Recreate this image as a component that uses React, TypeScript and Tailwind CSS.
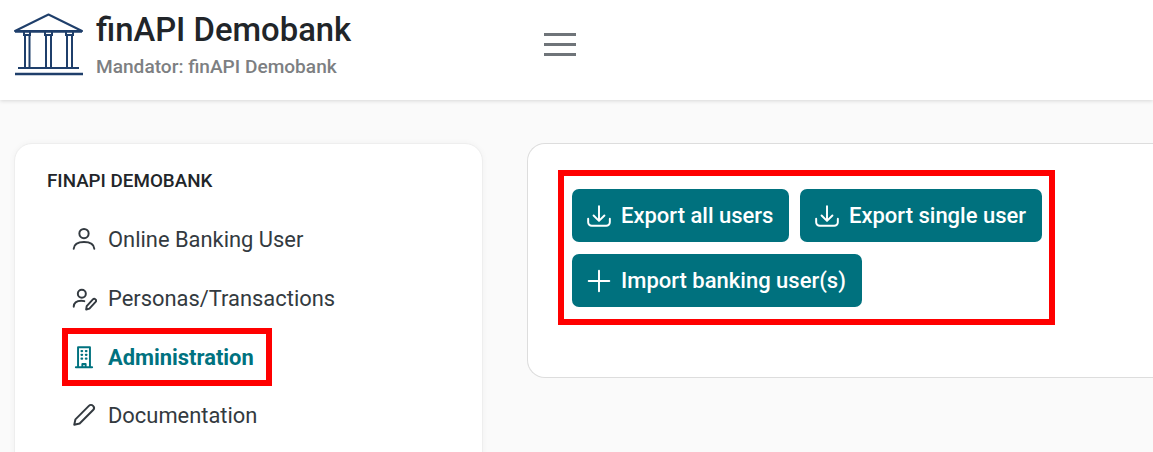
import React from "react";

const iconProps = {
  fill: "none",
  stroke: "currentColor",
  strokeWidth: 1.8,
  strokeLinecap: "round" as const,
  strokeLinejoin: "round" as const,
  viewBox: "0 0 24 24",
};

function Logo() {
  return (
    <svg width="70" height="63" viewBox="0 0 70 63" fill="none" stroke="#1f3f6b" strokeWidth="2" className="shrink-0">
      <path d="M1 18 L34.500 1.500 L68 18 Z" strokeLinejoin="round" />
      <path d="M1 18.500 H68" strokeWidth="2.500" />
      <path d="M10 19v3h6v-3M10 22h6M11 22v33M15.500 22v33" />
      <path d="M31 19v3h7v-3M31 22h7M32 22v33M37 22v33" />
      <path d="M52 19v3h7v-3M52 22h7M53 22v33M58 22v33" />
      <path d="M4 55 H65" />
      <path d="M1 61 H69" strokeWidth="2.500" />
    </svg>
  );
}

function DownloadIcon() {
  return (
    <svg width="26" height="26" {...iconProps} className="shrink-0">
      <path d="M2 14.500v3.200A3.300 3.300 0 0 0 5.300 21h13.400a3.300 3.300 0 0 0 3.300-3.300v-3.200" />
      <path d="M12 3v13M7 11.500l5 5 5-5" />
    </svg>
  );
}

function NavItem({ icon, label }: { icon: React.ReactNode; label: string }) {
  return (
    <div className="flex h-[46px] items-center gap-[11px] text-[#333a40]">
      <span className="-ml-[1px] flex w-[27px] justify-center">{icon}</span>
      <span className="pt-[2px] text-[21.9px] leading-none">{label}</span>
    </div>
  );
}

function ActionButton({ icon, label, width }: { icon: React.ReactNode; label: string; width: string }) {
  return (
    <button className={`flex h-[53px] items-center gap-[9px] rounded-[7px] bg-[#00717e] pl-[14px] text-[22px] font-medium whitespace-nowrap text-white ${width}`}>
      {icon}
      <span>{label}</span>
    </button>
  );
}

export default function App() {
  return (
    <div className="flex h-[452px] w-[1153px] flex-col overflow-hidden bg-[#fafafa] font-['Roboto',sans-serif]">
      <header className="flex h-[100px] shrink-0 items-start bg-white shadow-[0_1px_4px_rgba(0,0,0,0.14)]">
        <div className="mt-[13px] ml-[14px]">
          <Logo />
        </div>
        <div className="ml-[12px] w-[447px] pt-[10px]">
          <div className="text-[32.8px] leading-[40px] font-medium text-[#212529]">finAPI Demobank</div>
          <div className="mt-[6px] text-[19.1px] leading-[22px] font-medium text-[#7d7f82]">Mandator: finAPI Demobank</div>
        </div>
        <svg width="34" height="24" viewBox="0 0 34 24" className="mt-[32px] shrink-0" stroke="#6f7479" strokeWidth="3">
          <path d="M1 2.500h32M1 12.500h32M1 22.500h32" />
        </svg>
      </header>
      <main className="flex items-start gap-[44px] pt-[43px] pl-[14px]">
        <nav className="h-[340px] w-[469px] shrink-0 rounded-[18px] border border-[#eeeeee] bg-white pt-[27px] pl-[32px] shadow-[0_0_6px_rgba(0,0,0,0.04)]">
          <div className="text-[18.8px] leading-[20px] font-medium text-[#212529]">FINAPI DEMOBANK</div>
          <div className="mt-[25px] flex flex-col gap-[13px] pl-[24px]">
            <NavItem
              label="Online Banking User"
              icon={
                <svg width="26" height="26" {...iconProps}>
                  <circle cx="12" cy="7" r="4.300" />
                  <path d="M2.500 21c.3-4.200 3.400-6.300 9.500-6.300S21.200 16.800 21.500 21" />
                </svg>
              }
            />
            <NavItem
              label="Personas/Transactions"
              icon={
                <svg width="26" height="26" {...iconProps}>
                  <circle cx="10" cy="8" r="3.700" />
                  <path d="M2.500 20c.2-3.600 2.800-5.500 7-5.500 1 0 2 .1 2.800.4" />
                  <path d="M14.500 19.500l5.700-6.200a1.700 1.700 0 0 1 2.500 2.300l-5.700 6.200-3 .8z" />
                </svg>
              }
            />
            <div className="-mt-[6px] -mb-[7px] -ml-[9px] w-[210px] border-[6px] border-[#ff0000] pl-[3px]">
              <div className="flex h-[46px] items-center gap-[11px] font-bold text-[#00727f]">
                <span className="flex w-[26px] justify-center">
                  <svg width="26" height="26" {...iconProps}>
                    <path d="M6.500 21.500V3h11v18.500M4.500 21.500h15M10.500 21.500v-3h3v3" />
                    <path d="M9.700 6.500h.6M13.700 6.500h.6M9.700 10h.6M13.700 10h.6M9.700 13.500h.6M13.700 13.500h.6" strokeWidth="2" />
                  </svg>
                </span>
                <span className="pt-[2px] text-[21.9px] leading-none whitespace-nowrap">Administration</span>
              </div>
            </div>
            <NavItem
              label="Documentation"
              icon={
                <svg width="26" height="26" {...iconProps}>
                  <path d="M3 21l1.100-5L16.500 3.600a2.700 2.700 0 0 1 3.900 3.800L8 19.900z" />
                </svg>
              }
            />
          </div>
        </nav>
        <section className="h-[235px] flex-1 rounded-l-[18px] border border-r-0 border-[#dddddd] bg-white pt-[26px] pl-[30px]">
          <div className="flex h-[155px] w-[497px] flex-col gap-[12px] border-[6px] border-[#ff0000] pt-[13px] pl-[8px]">
            <div className="flex gap-[11px]">
              <ActionButton icon={<DownloadIcon />} label="Export all users" width="w-[217px]" />
              <ActionButton icon={<DownloadIcon />} label="Export single user" width="w-[242px]" />
            </div>
            <ActionButton
              label="Import banking user(s)"
              width="w-[290px]"
              icon={
                <svg width="26" height="26" {...iconProps}>
                  <path d="M12 2.500v19M2.500 12h19" />
                </svg>
              }
            />
          </div>
        </section>
      </main>
    </div>
  );
}
